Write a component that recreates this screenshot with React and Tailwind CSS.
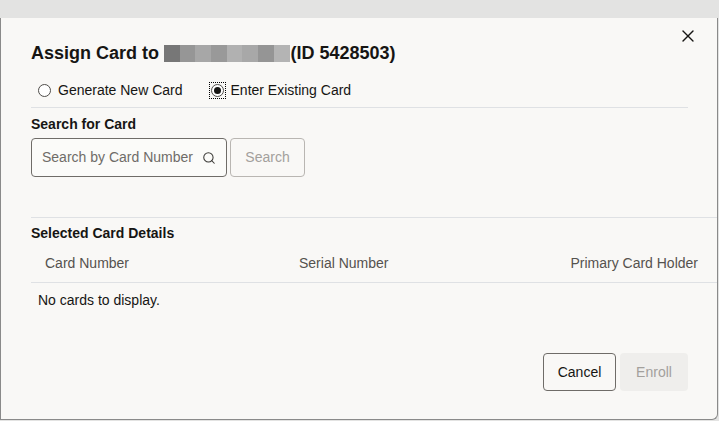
import React, { useState } from 'react';
import { X, Search } from 'lucide-react';

const redact = ['#777777', '#969696', '#a7a7a7', '#999999', '#b1b1b1', '#a8a8a8', '#959595', '#b4b4b4'];

const Radio = ({ checked, label, focused, onClick }) => (
  <button onClick={onClick} className="flex items-center gap-[7px] text-[14px] text-[#161513]">
    <span className={`flex items-center justify-center ${focused ? 'outline-1 outline-dotted outline-black outline-offset-[1px]' : ''}`}>
      <span className="w-[13px] h-[13px] rounded-full border border-[#4f4d4a] flex items-center justify-center bg-white">
        {checked && <span className="w-[7px] h-[7px] rounded-full bg-[#161513]" />}
      </span>
    </span>
    {label}
  </button>
);

const App = () => {
  const [mode, setMode] = useState('existing');

  return (
    <div className="w-[719px] h-[421px] bg-[#e3e3e2] pt-[18px] overflow-hidden" style={{ fontFamily: '"Liberation Sans", Arial, sans-serif' }}>
      <div className="h-[402px] w-[718px] bg-[#f9f8f6] border-l border-b border-r border-[#8a8a8a] rounded-br-[6px] flex flex-col">
        {/* Header */}
        <div className="flex justify-between items-start pl-[30px] pr-[19px] pt-[20px]">
          <h1 className="flex items-center text-[18px] font-bold text-[#161513] mt-[2px]">
            <span>Assign Card to</span>
            <span className="flex ml-[5px] mr-[1px]">
              {redact.map((c, i) => (
                <span key={i} className="w-[15.7px] h-[17px]" style={{ backgroundColor: c }} />
              ))}
            </span>
            <span>(ID 5428503)</span>
          </h1>
          <X className="w-[20px] h-[20px] mt-[-12px] text-[#161513]" strokeWidth={1.6} />
        </div>

        {/* Mode radios */}
        <div className="ml-[30px] mr-[29px] mt-[13px] pl-[7px] pb-[6px] border-b border-[#dfe1e4] flex gap-[28px]">
          <Radio label="Generate New Card" checked={mode === 'new'} onClick={() => setMode('new')} />
          <Radio label="Enter Existing Card" checked={mode === 'existing'} focused onClick={() => setMode('existing')} />
        </div>

        {/* Search */}
        <div className="px-[30px] mt-[6px]">
          <div className="text-[14px] font-bold text-[#161513]">Search for Card</div>
          <div className="flex gap-[3px] mt-[3px]">
            <div className="w-[196px] h-[39px] border border-[#6f6c68] rounded-[4px] bg-white/40 flex items-center pl-[10px] pr-[10px]">
              <span className="flex-1 text-[14px] text-[#6f6c68] whitespace-nowrap overflow-hidden">Search by Card Number</span>
              <Search className="w-[14px] h-[14px] text-[#3a3936]" strokeWidth={1.8} />
            </div>
            <button className="w-[75px] h-[39px] border border-[#b9b6b2] rounded-[4px] text-[14px] text-[#a3a09c]">Search</button>
          </div>
        </div>

        {/* Selected card details */}
        <div className="ml-[30px] mt-[40px] border-t border-[#dfe1e4]">
          <div className="text-[14px] font-bold text-[#161513] mt-[5px]">Selected Card Details</div>
          <div className="flex items-center h-[39px] text-[14px] text-[#55524e] border-b border-[#dfe1e4] pl-[14px] pr-[19px]">
            <span className="w-[254px]">Card Number</span>
            <span className="flex-1">Serial Number</span>
            <span>Primary Card Holder</span>
          </div>
          <div className="text-[14px] text-[#161513] pl-[7px] mt-[7px]">No cards to display.</div>
        </div>

        {/* Footer */}
        <div className="flex justify-end gap-[4px] pr-[29px] mt-auto mb-[28px]">
          <button className="w-[73px] h-[38px] border border-[#6f6c68] rounded-[4px] text-[14px] text-[#161513]">Cancel</button>
          <button className="w-[68px] h-[38px] rounded-[4px] bg-[#efeeec] text-[14px] text-[#a3a09c]">Enroll</button>
        </div>
      </div>
    </div>
  );
};

export default App;
